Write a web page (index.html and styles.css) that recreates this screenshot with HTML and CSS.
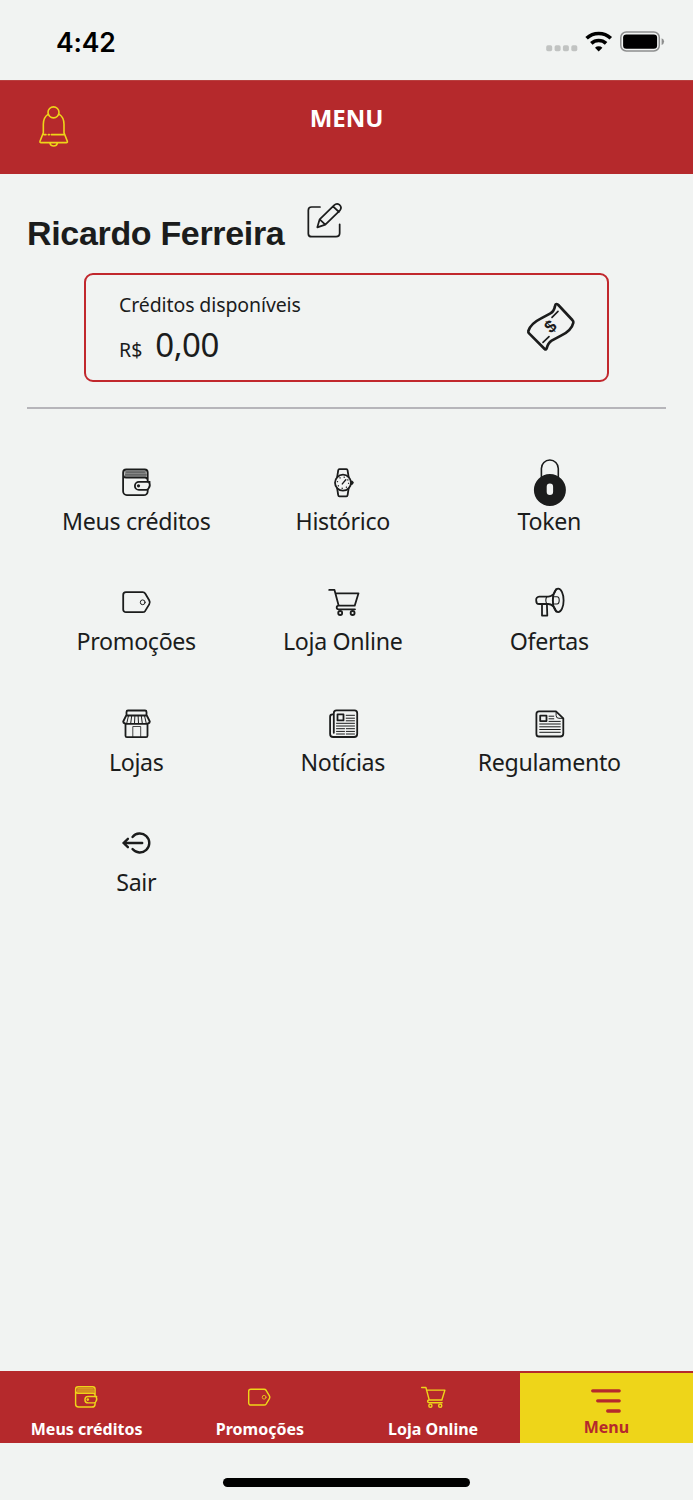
FILE: index.html
```html
<!DOCTYPE html>
<html lang="pt-BR">
<head>
<meta charset="utf-8">
<title>Menu</title>
<link rel="stylesheet" href="styles.css">
</head>
<body>
<svg class="defs" aria-hidden="true">
  <symbol id="wallet" viewBox="0 0 48 48">
    <path d="M12 12.2h22v6.3H12z" fill="currentColor" opacity=".5" stroke="none"/>
    <path d="M10.6 14.2a3.2 3.2 0 0 1 3.2-3.2h18.4a3 3 0 0 1 3 3v9M35.2 31.5v1.2a4 4 0 0 1-4 4H14.4a4 4 0 0 1-3.8-4V14.2M10.6 16c0 2 1 3.2 3 3.2h18.8q2.8 0 2.8 2.5"/>
    <path d="M14 13.6h18M13 16.4h21" stroke-width=".5"/>
    <path d="M37.2 23.4H26.4a4 4 0 0 0 0 8h7.6q1.8 0 2.3-1.8c1.4-2 1.4-4 .1-6.2"/>
    <circle cx="26" cy="27.3" r="1.6" fill="currentColor" stroke="none"/>
  </symbol>
  <symbol id="watch" viewBox="0 0 48 48">
    <path d="M17.7 18.4l1-6.600q.2-1.200 1.200-1.200h7q1 0 1.200 1.200l1 6.600M17.700 30l1 6.600q.2 1.200 1.200 1.200h7q1 0 1.200-1.200l1-6.600"/>
    <circle cx="23.500" cy="24.200" r="8"/>
    <circle cx="23.500" cy="24.200" r="5.600" stroke-width="1.200" stroke-linecap="butt" stroke-dasharray="1.200 3.198"/>
    <path d="M22.800 25.400l3.500-4.200" stroke-width="1.400"/>
    <path d="M32.200 22.800l1.200 1.400-1.200 1.400z" fill="currentColor"/>
  </symbol>
  <symbol id="lock" viewBox="0 0 48 48">
    <path d="M15.900 19V10a8.450 8.450 0 0 1 16.900 0v9" stroke-width="1.600"/>
    <path fill="currentColor" stroke="none" fill-rule="evenodd" d="M24.400 15.500a16 16 0 1 0 0 32a16 16 0 1 0 0-32zM21.200 28.200a3.200 3.200 0 0 1 6.400 0v5a3.200 3.200 0 0 1-6.400 0z"/>
  </symbol>
  <symbol id="tag" viewBox="0 0 48 48">
    <path d="M13.400 14.200h16.800q1.600 0 2.500 1.300l4 6.700q1.300 2.100 0 4.200l-4 6.500q-.9 1.300-2.500 1.300H13.400a2.700 2.700 0 0 1-2.700-2.700V16.900a2.700 2.700 0 0 1 2.700-2.700z"/>
    <circle cx="30.200" cy="24.300" r="2.400" stroke-width="1"/>
  </symbol>
  <symbol id="cart" viewBox="0 0 48 48">
    <path d="M9.700 11.900H15l4.200 15.800M16 15.300h23l-3.800 12.400H19.200q-2 0-2 1.800t2 1.800h16.300"/>
    <circle cx="20.700" cy="35" r="2"/><circle cx="33.100" cy="35" r="2"/>
  </symbol>
  <symbol id="horn" viewBox="0 0 48 48">
    <ellipse cx="32.700" cy="22.400" rx="5.400" ry="11.700"/>
    <path d="M30.700 11.300c-1.800 5-4.500 7.300-8 7.300h-9a3.200 3.200 0 0 0-3 3.800q0 3.600 3 3.600h9c3.500 0 6.200 2.500 8 7.500M16.500 26.300v11.300h5.300l-.4-11.300"/>
    <path d="M21.300 18.900q-2 3.300 0 7M27.500 18.700h4q2.200 0 2.200 3.600t-2.200 3.700h-4M27.500 16.500v11.800" stroke-width="1.100"/>
  </symbol>
  <symbol id="store" viewBox="0 0 48 48">
    <path d="M14 16v-3.500q0-1.500 1.500-1.500h17q1.500 0 1.500 1.500V16M13.700 16h20.600l3 6q-.4 2.400-3.600 2.400H14.300q-3.200 0-3.600-2.400zM13 24.500v11.800q0 1.400 1.400 1.400h19.200q1.400 0 1.400-1.400V24.500"/>
    <path d="M16 16.200l-1.800 7.800M19.200 16.200l-1 7.800M22.400 16.200l-.4 7.800M25.600 16.200l.4 7.800M28.800 16.200l1 7.800M32 16.200l1.800 7.800" stroke-width="1"/>
    <path d="M20.300 37.500V27h7.900v10.500" stroke-width=".8"/>
  </symbol>
  <symbol id="news" viewBox="0 0 48 48">
    <path d="M17 10.900h18q2.700 0 2.700 2.700v20.900q0 3-3 3H13.600q-3 0-3-3V17.200q0-2.400 2.400-2.400h1.300v18.500M14.300 15v-1.500q0-2.600 2.700-2.600"/>
    <path d="M18 14.900h6v6h-6z"/>
    <path d="M26.700 15.800H35M26.700 18.700H35M26.700 21.300H35M17 23.800h18M17 26.500h18M17 29.200h8M26.800 29.200H35M17 31.900h8M26.800 31.900H35M17 34.500h8M26.800 34.500H35" stroke-width="1"/>
  </symbol>
  <symbol id="rules" viewBox="0 0 48 48">
    <path d="M13.500 11.900h17l7.300 7V34q0 3-3 3H13.500q-2.600 0-2.600-2.600V14.500q0-2.600 2.600-2.600z"/>
    <path d="M14.700 16.200h6.300v5.400h-6.300z"/>
    <path d="M30.600 12.300v3.700q0 2.800 2.800 2.800h4M23.500 16.700h4.800M23.500 19.300h4.800M23.500 21.900h11.300M14.200 24.500h20.600M14.200 27.300h20.600M14.200 30h20.600M14.200 32.800h20.600" stroke-width="1"/>
  </symbol>
  <symbol id="exit" viewBox="0 0 48 48">
    <path d="M20 17.900a9.500 9.500 0 1 1 0 12.200M11 24h18.700M15.400 19.800L11 24l4.400 4.200" stroke-width="2.400"/>
  </symbol>
</svg>

<div class="screen">
  <div class="status">
    <span class="time">4:42</span>
    <svg class="signals" width="120" height="24" viewBox="0 0 120 24">
      <g fill="#c1c3c2"><rect x=".2" y="14.300" width="6" height="6" rx="1.700"/><rect x="8.600" y="14.300" width="6" height="6" rx="1.700"/><rect x="16.900" y="14.300" width="6" height="6" rx="1.700"/><rect x="25.300" y="14.300" width="6" height="6" rx="1.700"/></g>
      <g fill="none" stroke="#000" stroke-width="3.600">
        <path d="M40.600 7.300a17.500 17.500 0 0 1 24.200 0"/><path d="M45.300 12.400a10.800 10.800 0 0 1 14.800 0"/>
      </g>
      <path d="M52.700 20.600l-3.700-3.800a5.400 5.400 0 0 1 7.400 0z"/>
      <rect x="74.800" y="1" width="38.500" height="19" rx="5.500" fill="none" stroke="#8d8e8e" stroke-width="1.500"/>
      <rect x="77.100" y="3.400" width="34" height="14.300" rx="3.200"/>
      <path d="M115.600 7.300q2.500.8 2.500 3.300t-2.500 3.300z" fill="#8d8e8e"/>
    </svg>
  </div>

  <header class="header">
    <svg class="bell" viewBox="111 309 105 135">
      <circle cx="160.500" cy="337" r="16.500"/>
      <path d="M144 343q-14 9-14 30v25l-10 26q-1 4 3 4h76q4 0 3-4l-10-26v-25q0-21-14-30M132 404h6M145 404h3M154 404h38M150 430q2 8 11 8t11-8"/>
    </svg>
    <h1 class="title">MENU</h1>
  </header>

  <main class="main">
    <div class="user">
      <h2 class="name">Ricardo Ferreira</h2>
      <svg class="edit" viewBox="915 605 120 114">
        <path d="M960 623h-25q-10 0-10 10v70q0 9 10 9h73q11 0 11-10v-27"/>
        <path d="M952 684l7-24 43-42q8-8 16-2 9 8 2 17l-44 43zM959 660l17 16M999 621l18 17"/>
      </svg>
    </div>

    <section class="card">
      <div>
        <p class="card-label">Créditos disponíveis</p>
        <p class="amount"><span class="currency">R$</span><span class="value">0,00</span></p>
      </div>
      <svg class="money" viewBox="195 120 156 156">
        <path d="M290 132q-4 0-5 7-3 16-15 22l-28 15q-30 15-37 37-1 4 3 8l46 46q4 4 6-2 4-16 15-23l28-15q32-16 37-39 1-4-3-8l-42-45q-2-3-5-3z" stroke-width="8"/>
        <path d="M294 154l-18 18M267 230l-18 17" stroke-width="5"/>
        <text class="money-sign" x="271" y="217" text-anchor="middle" transform="rotate(-42 271 199)">$</text>
      </svg>
    </section>

    <hr class="rule">

    <nav class="grid">
      <a class="item"><svg class="icon" viewBox="-.5 -.5 48 48"><use href="#wallet" width="48" height="48"/></svg><span class="label">Meus créditos</span></a>
      <a class="item"><svg class="icon" viewBox="-.5 -.5 48 48"><use href="#watch" width="48" height="48"/></svg><span class="label">Histórico</span></a>
      <a class="item"><svg class="icon" viewBox="-.5 -.5 48 48"><use href="#lock" width="48" height="48"/></svg><span class="label">Token</span></a>
      <a class="item"><svg class="icon" viewBox="-.5 0 48 48"><use href="#tag" width="48" height="48"/></svg><span class="label">Promoções</span></a>
      <a class="item"><svg class="icon" viewBox="-.5 0 48 48"><use href="#cart" width="48" height="48"/></svg><span class="label">Loja Online</span></a>
      <a class="item"><svg class="icon" viewBox="-.5 0 48 48"><use href="#horn" width="48" height="48"/></svg><span class="label">Ofertas</span></a>
      <a class="item"><svg class="icon" viewBox="-.5 -.5 48 48"><use href="#store" width="48" height="48"/></svg><span class="label">Lojas</span></a>
      <a class="item"><svg class="icon" viewBox="-.5 -.5 48 48"><use href="#news" width="48" height="48"/></svg><span class="label">Notícias</span></a>
      <a class="item"><svg class="icon" viewBox="-.5 -.5 48 48"><use href="#rules" width="48" height="48"/></svg><span class="label">Regulamento</span></a>
      <a class="item"><svg class="icon" viewBox="-.5 0 48 48"><use href="#exit" width="48" height="48"/></svg><span class="label">Sair</span></a>
    </nav>
  </main>

  <nav class="tabs">
    <a class="tab"><svg class="tab-icon" viewBox="1 0 48 48"><use href="#wallet" width="48" height="48"/></svg><span class="tab-label">Meus créditos</span></a>
    <a class="tab"><svg class="tab-icon" viewBox="1 0 48 48"><use href="#tag" width="48" height="48"/></svg><span class="tab-label">Promoções</span></a>
    <a class="tab"><svg class="tab-icon" viewBox="0 0 48 48"><use href="#cart" width="48" height="48"/></svg><span class="tab-label">Loja Online</span></a>
    <a class="tab active"><svg class="tab-icon" viewBox="0 0 38 38"><path d="M5.700 12.800h26.500M10.700 22.800h21.500M20.700 33h11.500" stroke-width="3.300"/></svg><span class="tab-label">Menu</span></a>
  </nav>
  <div class="home"><span class="home-bar"></span></div>
</div>
</body>
</html>
```

FILE: styles.css
```css
* { box-sizing: border-box; }
body { margin: 0; background: #f1f3f2; color: #1b1c1c; font-family: "Noto Sans", sans-serif; }
h1, h2, p { margin: 0; }
.defs { display: none; }
svg { display: block; flex: none; fill: none; stroke: currentColor; stroke-width: 1.8; stroke-linecap: round; stroke-linejoin: round; }
.screen { width: 693px; height: 1500px; display: flex; flex-direction: column; overflow: hidden; }

.status { height: 80px; flex: none; display: flex; justify-content: space-between; padding: 25px 27px 0 56px; color: #000; }
.time { font: 600 26.500px/34px Inter, sans-serif; letter-spacing: -.2px; }
.signals { margin-top: 6px; stroke: none; fill: #000; stroke-linecap: butt; }

.header { height: 94px; flex: none; display: grid; grid-template-columns: 1fr auto 1fr; align-items: start; background: #b5292c; border-top: 1px solid #b8403f; }
.bell { width: 35px; height: 45px; margin: 22px 0 0 37px; color: #eed519; stroke-width: 4.800; }
.title { margin-top: 19px; color: #fff; font-size: 24px; line-height: 36px; font-weight: 700; }

.main { flex: 1; padding: 27px 27px 0; }
.user { display: flex; align-items: flex-start; }
.name { margin-top: 11px; width: 278px; font: 700 34px/42px "Liberation Sans", sans-serif; letter-spacing: -.33px; white-space: nowrap; }
.edit { width: 40px; height: 38px; stroke-width: 5.200; }

.card { height: 109px; margin: 19px 57px 0; padding: 16px 30px 0 33px; display: flex; justify-content: space-between; border: 2px solid #c1272d; border-radius: 9px; }
.card-label { font-size: 19.500px; line-height: 27px; letter-spacing: -.1px; }
.amount { display: flex; align-items: baseline; gap: 13px; line-height: 53px; }
.currency { font-size: 19.500px; }
.value { font-size: 33px; letter-spacing: -.5px; }
.money { width: 52px; height: 52px; margin-top: 9px; }
.money-sign { font: 700 52px "Liberation Sans", sans-serif; fill: currentColor; stroke: none; }

.rule { height: 2px; margin: 25px 0 0; border: 0; background: #b6b5ba; }
.grid { display: grid; grid-template-columns: repeat(3, 206.500px); grid-auto-rows: 120.500px; margin: 48.500px 0 0 6px; }
.item { display: flex; flex-direction: column; align-items: center; }
.icon { width: 48px; height: 48px; }
.label { font-size: 23.200px; line-height: 30px; letter-spacing: -.33px; white-space: nowrap; }

.tabs { height: 72px; flex: none; display: grid; grid-template-columns: repeat(4, 1fr); background: #b5292c; border-top: 2px solid #b5292c; }
.tab { display: flex; flex-direction: column; align-items: center; padding-top: 5px; color: #eed519; }
.tab-icon { width: 38px; height: 38px; }
.tab-label { margin-top: .500px; color: #fff; font-size: 16px; line-height: 24px; font-weight: 700; white-space: nowrap; }
.active { background: #eed519; color: #b5292c; }
.active .tab-label { margin-top: -1px; color: #b5292c; }
.home { height: 57px; flex: none; display: flex; justify-content: center; padding-top: 35px; }
.home-bar { width: 247px; height: 8.500px; border-radius: 5px; background: #000; }
```
